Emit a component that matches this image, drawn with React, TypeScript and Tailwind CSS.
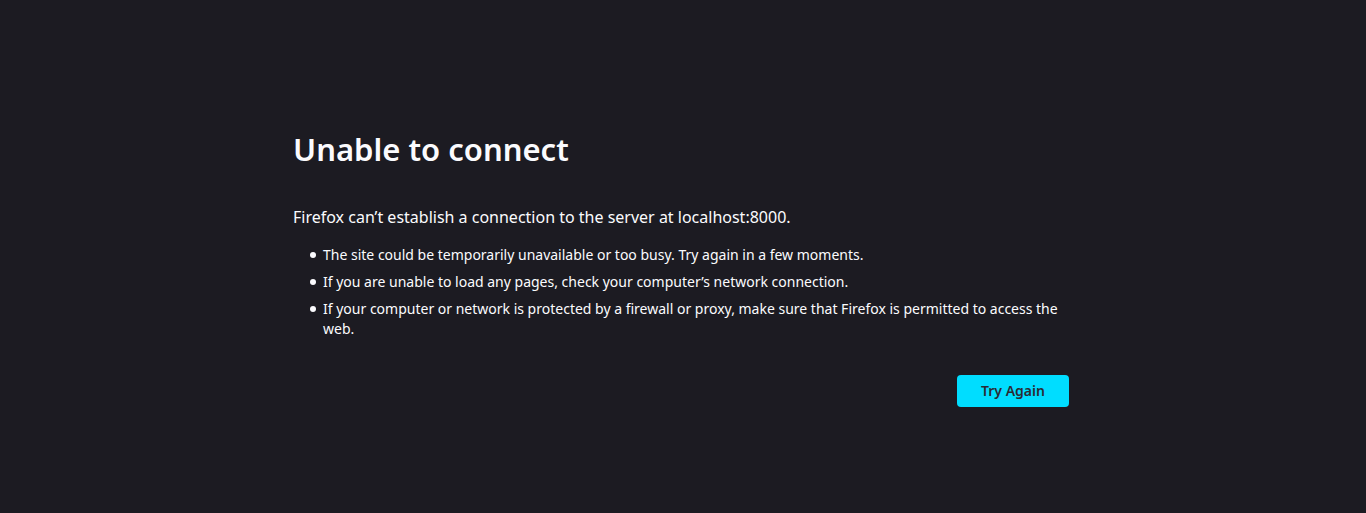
export default function App() {
  return (
    <main className="flex min-h-screen flex-col items-center justify-center bg-[#1c1b22] px-12 py-10 font-['Noto_Sans','Open_Sans',sans-serif] text-[14px] leading-5 text-[#fbfbfe]">
      <div className="w-full max-w-[780px] pt-[22px] pr-1">
        <h1 className="text-[31px] leading-10 font-semibold">Unable to connect</h1>
        <p className="mt-9 text-[16px] leading-6">Firefox can’t establish a connection to the server at localhost:8000.</p>
        <ul className="mt-4 flex flex-col gap-[7px] pl-[17px] *:flex *:before:mt-[7px] *:before:mr-[7px] *:before:size-[6px] *:before:shrink-0 *:before:rounded-full *:before:bg-[#fbfbfe] *:before:content-['']">
          <li>The site could be temporarily unavailable or too busy. Try again in a few moments.</li>
          <li>If you are unable to load any pages, check your computer’s network connection.</li>
          <li>If your computer or network is protected by a firewall or proxy, make sure that Firefox is permitted to access the web.</li>
        </ul>
        <div className="mt-9 flex justify-end">
          <button type="button" className="h-8 w-28 rounded bg-[#00ddff] font-semibold text-[#2b2a33]">Try Again</button>
        </div>
      </div>
    </main>
  );
}
